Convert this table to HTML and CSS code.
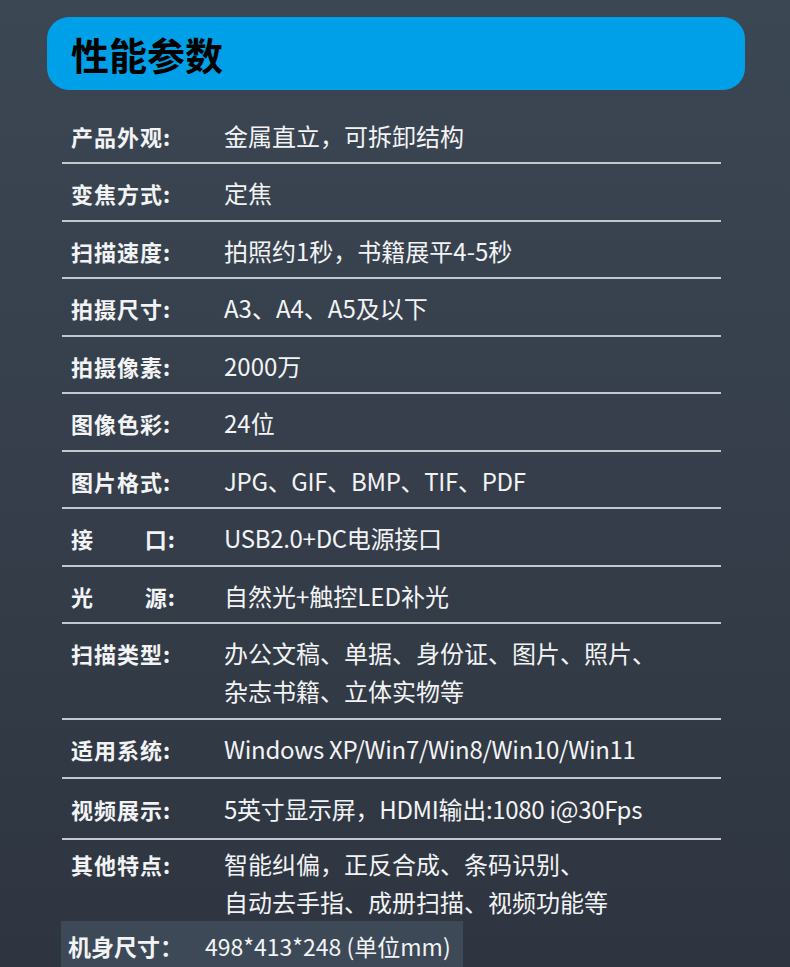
FILE: index.html
```html
<!DOCTYPE html>
<html lang="zh-CN">
<head>
    <meta charset="UTF-8">
    <meta name="viewport" content="width=device-width, initial-scale=1.0">
    <title>性能参数</title>
    <link rel="stylesheet" href="styles.css">
</head>
<body>
    <div class="page">
        <h1 class="title-bar">性能参数</h1>

        <div class="specs">
            <div class="row"><span class="label">产品外观:</span><span class="value">金属直立，可拆卸结构</span></div>
            <div class="row"><span class="label">变焦方式:</span><span class="value">定焦</span></div>
            <div class="row"><span class="label">扫描速度:</span><span class="value">拍照约1秒，书籍展平4-5秒</span></div>
            <div class="row"><span class="label">拍摄尺寸:</span><span class="value">A3、A4、A5及以下</span></div>
            <div class="row"><span class="label">拍摄像素:</span><span class="value">2000万</span></div>
            <div class="row"><span class="label">图像色彩:</span><span class="value">24位</span></div>
            <div class="row"><span class="label">图片格式:</span><span class="value latin">JPG、GIF、BMP、TIF、PDF</span></div>
            <div class="row"><span class="label split"><span>接</span><span>口:</span></span><span class="value latin">USB2.0+DC电源接口</span></div>
            <div class="row"><span class="label split"><span>光</span><span>源:</span></span><span class="value">自然光+触控LED补光</span></div>
            <div class="row"><span class="label">扫描类型:</span><span class="value">办公文稿、单据、身份证、图片、照片、<br>杂志书籍、立体实物等</span></div>
            <div class="row wide"><span class="label">适用系统:</span><span class="value latin">Windows XP/Win7/Win8/Win10/Win11</span></div>
            <div class="row tall"><span class="label">视频展示:</span><span class="value latin">5英寸显示屏，HDMI输出:1080 i@30Fps</span></div>
            <div class="row last"><span class="label">其他特点:</span><span class="value">智能纠偏，正反合成、条码识别、<br>自动去手指、成册扫描、视频功能等</span></div>
        </div>

        <div class="size-box">
            <span class="size-label">机身尺寸：</span>
            <span class="size-value">498*413*248 (单位mm)</span>
        </div>
    </div>
</body>
</html>
```

FILE: styles.css
```css
html, body {
    margin: 0;
    padding: 0;
}
body {
    font-family: "Noto Sans CJK SC", "Noto Sans", sans-serif;
    background: linear-gradient(to bottom, #3c4754, #2e3540);
    color: #f2f3f4;
    height: 967px;
    overflow: hidden;
}
.page {
    padding: 17px 0 0 0;
}
.title-bar {
    margin: 0 0 0 47px;
    width: 698px;
    height: 73px;
    box-sizing: border-box;
    padding-left: 24px;
    background-color: #00a0e8;
    border-radius: 22px;
    color: #000;
    font-size: 38px;
    font-weight: 700;
    line-height: 73px;
}
.specs {
    margin: 16.5px 0 0 62px;
    width: 659px;
}
.row {
    display: flex;
    align-items: flex-start;
    padding: 10px 0 7.5px;
    border-bottom: 2px solid #c3c8ce;
    line-height: 38px;
}
.row.wide {
    padding-bottom: 9px;
}
.row.tall {
    padding-top: 11px;
    padding-bottom: 10.5px;
}
.row.last {
    border-bottom: none;
    padding: 5px 0 0;
}
.label {
    width: 105px;
    margin-left: 9px;
    margin-right: 48px;
    font-size: 22px;
    font-weight: 700;
    letter-spacing: 1px;
    white-space: nowrap;
}
.split {
    display: flex;
    justify-content: space-between;
}
.value {
    font-size: 24px;
    font-weight: 400;
}
.value.latin {
    letter-spacing: -0.3px;
}
.size-box {
    margin: 0 0 0 61px;
    width: 402px;
    height: 50px;
    background-color: #3d4957;
    display: flex;
    align-items: center;
}
.size-label {
    margin-left: 7px;
    width: 137px;
    font-size: 23px;
    font-weight: 700;
}
.size-value {
    font-size: 23px;
}
```
